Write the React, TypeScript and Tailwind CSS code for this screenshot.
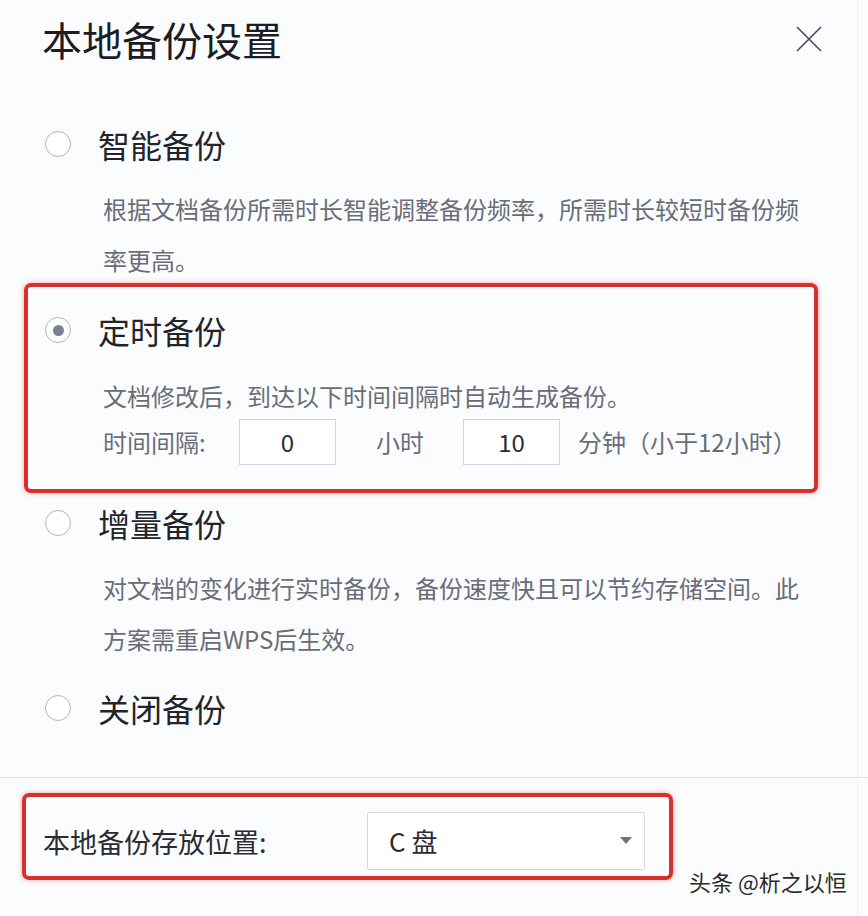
import React from "react";

const FONT = '"Noto Sans CJK SC", "Noto Sans", sans-serif';

function Radio({ checked }: { checked?: boolean }) {
  return (
    <div className="flex h-[26px] w-[26px] shrink-0 items-center justify-center rounded-full border-[1.5px] border-[#b3b5ba] bg-white">
      {checked && <div className="h-[11px] w-[11px] rounded-full bg-[#7b808e]" />}
    </div>
  );
}

function OptionRow({ label, checked }: { label: string; checked?: boolean }) {
  return (
    <div className="flex h-[48px] items-center gap-[27px]">
      <Radio checked={checked} />
      <span className="text-[32px] leading-none text-[#23242a]">{label}</span>
    </div>
  );
}

export default function App() {
  return (
    <div
      className="relative h-[916px] w-[868px] overflow-hidden bg-[#fbfcfe]"
      style={{ fontFamily: FONT }}
    >
      <div className="absolute right-[10px] top-0 h-full w-px bg-[#eef0f3]" />
      {/* Header */}
      <div className="flex h-[78px] items-center justify-between pl-[42px] pr-[46px]">
        <span className="text-[40px] leading-none text-[#1b1c24]">本地备份设置</span>
        <svg width="26" height="26" viewBox="0 0 26 26">
          <path d="M1 1 L25 25 M25 1 L1 25" stroke="#4a4b52" strokeWidth="1.6" fill="none" />
        </svg>
      </div>

      <div className="flex flex-col pl-[45px]">
        {/* Option 1 */}
        <div className="mt-[42px]">
          <OptionRow label="智能备份" />
        </div>
        <div className="ml-[58px] mt-[15px] h-[100px] text-[24px] leading-[51px] text-[#6a6d77]">
          <div className="whitespace-nowrap">根据文档备份所需时长智能调整备份频率，所需时长较短时备份频</div>
          <div className="whitespace-nowrap">率更高。</div>
        </div>

        {/* Option 2 in red box */}
        <div className="ml-[-21px] w-[794px] rounded-[7px] border-[4px] border-[#d8312d] pb-[24px] pl-[17px] pt-[19px] shadow-[0_0_5px_rgba(216,49,45,0.45)]">
          <OptionRow label="定时备份" checked />
          <div className="ml-[58px] mt-[22px] whitespace-nowrap text-[24px] leading-[40px] text-[#6a6d77]">
            文档修改后，到达以下时间间隔时自动生成备份。
          </div>
          <div className="ml-[58px] mt-[3px] flex h-[46px] items-center whitespace-nowrap text-[24px] text-[#6a6d77]">
            <span className="w-[136px]">时间间隔:</span>
            <div className="flex h-[46px] w-[97px] items-center justify-center border border-[#d3d5da] bg-white text-[24px] text-[#2b2c33]">
              0
            </div>
            <span className="ml-[40px] w-[87px]">小时</span>
            <div className="flex h-[46px] w-[97px] items-center justify-center border border-[#d3d5da] bg-white text-[24px] text-[#2b2c33]">
              10
            </div>
            <span className="ml-[18px]">分钟（小于12小时）</span>
          </div>
        </div>

        {/* Option 3 */}
        <div className="mt-[6px]">
          <OptionRow label="增量备份" />
        </div>
        <div className="ml-[58px] mt-[15px] text-[24px] leading-[51px] text-[#6a6d77]">
          <div className="whitespace-nowrap">对文档的变化进行实时备份，备份速度快且可以节约存储空间。此</div>
          <div className="whitespace-nowrap">方案需重启WPS后生效。</div>
        </div>

        {/* Option 4 */}
        <div className="mt-[20px]">
          <OptionRow label="关闭备份" />
        </div>
      </div>

      {/* Divider */}
      <div className="mt-[45px] h-px w-full bg-[#dcdee2]" />

      {/* Location */}
      <div className="ml-[22px] mt-[15px] flex h-[87px] w-[651px] items-start rounded-[7px] border-[4px] border-[#d8312d] pl-[17px] pt-[15px] shadow-[0_0_5px_rgba(216,49,45,0.45)]">
        <span className="mt-[16px] w-[324px] whitespace-nowrap text-[27px] leading-none text-[#2a2b33]">
          本地备份存放位置:
        </span>
        <div className="flex h-[58px] w-[278px] items-center justify-between rounded-[2px] border border-[#d6d8dc] bg-white pl-[21px] pr-[12px]">
          <span className="text-[26px] leading-none text-[#2a2b33]">C 盘</span>
          <svg width="12" height="8" viewBox="0 0 12 8">
            <path d="M0 0 L12 0 L6 7 Z" fill="#6d7282" />
          </svg>
        </div>
      </div>

      {/* Watermark */}
      <div
        className="absolute left-[689px] top-[870px] whitespace-nowrap text-[22px] leading-none text-[#2a2a2a]"
        style={{ textShadow: "0 0 2px #fff, 0 0 2px #fff" }}
      >
        头条 @析之以恒
      </div>
    </div>
  );
}
